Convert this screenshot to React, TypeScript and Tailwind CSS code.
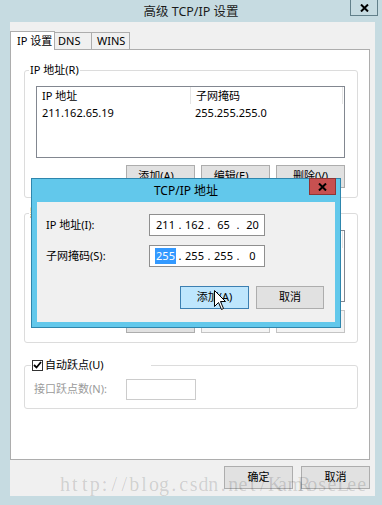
import React from "react";

const ui = "font-['Noto_Sans','Noto_Sans_CJK_SC',sans-serif]";

type Tone = "normal" | "disabled" | "hover";

function Button({
  label,
  w = "w-[69px]",
  tone = "normal",
}: {
  label: string;
  w?: string;
  tone?: Tone;
}) {
  const tones: Record<Tone, string> = {
    normal: "border-[#adadad] bg-[#e1e1e1] text-black",
    disabled: "border-[#c4c4c4] bg-[#f4f4f4] text-[#8b8b8b]",
    hover: "border-[#3c7fb1] bg-[#bee6fd] text-black",
  };
  return (
    <div
      className={`flex h-[23px] ${w} items-center justify-center border text-[11px] whitespace-nowrap ${tones[tone]}`}
    >
      {label}
    </div>
  );
}

function GroupBox({
  legend,
  className = "",
  children,
}: {
  legend: React.ReactNode;
  className?: string;
  children: React.ReactNode;
}) {
  return (
    <fieldset
      className={`ml-[13px] w-[334px] rounded-[3px] border border-[#dcdcdc] ${className}`}
    >
      {legend}
      {children}
    </fieldset>
  );
}

function ListView({ cols, rows }: { cols: string[]; rows: string[][] }) {
  return (
    <div className="ml-[11px] h-[72px] w-[309px] border border-[#828790] bg-white text-[11px]">
      <div className="flex h-[17px] leading-[17px]">
        <div className="w-[154px] border-r border-[#e5e5e5] pl-[5px]">
          {cols[0]}
        </div>
        <div className="w-[152px] border-r border-[#e5e5e5] pl-[5px]">
          {cols[1]}
        </div>
      </div>
      {rows.map((r) => (
        <div key={r[0]} className="flex h-[17px] leading-[17px]">
          <div className="w-[154px] pl-[5px]">{r[0]}</div>
          <div className="pl-[4px]">{r[1]}</div>
        </div>
      ))}
    </div>
  );
}

function IpField({ parts, selectFirst }: { parts: string[]; selectFirst?: boolean }) {
  return (
    <div className="flex h-[22px] w-[116px] items-center border border-[#8f8f8f] bg-white pl-[5px] text-[11px]">
      {parts.map((p, i) => (
        <React.Fragment key={i}>
          {i > 0 && <span className="w-[8px] text-center">.</span>}
          <span className="flex w-[21px] justify-center">
            <span
              className={
                i === 0 && selectFirst
                  ? "bg-[#3399ff] px-[1px] leading-[16px] text-white"
                  : "leading-[16px]"
              }
            >
              {p}
            </span>
          </span>
        </React.Fragment>
      ))}
    </div>
  );
}

function CloseX() {
  return (
    <svg width="9" height="8" viewBox="0 0 9 8">
      <path d="M1 0.5 L8 7.5 M8 0.5 L1 7.5" stroke="#000" strokeWidth="2" />
    </svg>
  );
}

const watermark = "http://blog.csdn.net/KamRoseLee";

export default function App() {
  return (
    <div
      className={`${ui} relative h-[505px] w-[382px] overflow-hidden bg-[#c6dbe1] text-black`}
    >
      {/* window title */}
      <div className="grid h-[22px] grid-cols-[28px_1fr_28px] px-[4px]">
        <div />
        <div className="pt-[1px] text-center text-[12.5px] leading-[21px] text-[#1b1b1b]">
          高级 TCP/IP 设置
        </div>
        <div className="flex h-[16px] items-center justify-center border border-t-0 border-[#62808a]">
          <CloseX />
        </div>
      </div>

      {/* client */}
      <div className="ml-[10px] flex h-[474px] w-[365px] flex-col bg-[#f0f0f0] pt-[9px]">
        {/* tabs */}
        <div className="relative z-10 -mb-px flex items-end text-[11px] whitespace-nowrap">
          <div className="h-[19px] w-[45px] border border-b-0 border-[#adadad] bg-white pl-[6px] leading-[18px]">
            IP 设置
          </div>
          <div className="-ml-px h-[18px] w-[38px] border border-[#adadad] bg-[#f0f0f0] pl-[3px] leading-[16px]">
            DNS
          </div>
          <div className="-ml-px h-[18px] w-[39px] border border-[#adadad] bg-[#f0f0f0] pl-[5px] leading-[16px]">
            WINS
          </div>
        </div>

        {/* tab panel */}
        <div className="h-[411px] w-[360px] border border-[#adadad] bg-white text-[11px]">
          <GroupBox
            className="mt-[12px] pb-[9px]"
            legend={<legend className="ml-[4px] px-[1px] leading-[16px]">IP 地址(R)</legend>}
          >
            <div className="mt-[8px]">
              <ListView
                cols={["IP 地址", "子网掩码"]}
                rows={[["211.162.65.19", "255.255.255.0"]]}
              />
            </div>
            <div className="mt-[7px] flex justify-end gap-[6px] pr-[12px]">
              <Button label="添加(A)..." />
              <Button label="编辑(E)..." />
              <Button label="删除(V)" />
            </div>
          </GroupBox>

          <GroupBox
            className="mt-[7px] pb-[9px]"
            legend={<legend className="ml-[4px] px-[1px] leading-[16px]">默认网关(F):</legend>}
          >
            <div className="mt-[9px]">
              <ListView cols={["网关", "跃点数"]} rows={[]} />
            </div>
            <div className="mt-[8px] flex justify-end gap-[6px] pr-[12px]">
              <Button label="添加(D)..." />
              <Button label="编辑(T)..." tone="disabled" />
              <Button label="删除(M)" tone="disabled" />
            </div>
          </GroupBox>

          <GroupBox
            className="mt-[14px] pb-[8px]"
            legend={
              <legend className="ml-[6px] pr-[47px] pl-[1px] leading-[16px]">
                <span className="flex items-center gap-[2px]">
                  <span className="flex h-[11px] w-[11px] items-center justify-center border border-[#333] bg-white">
                    <svg width="9" height="8" viewBox="0 0 9 8">
                      <path
                        d="M1 4 L3.5 6.5 L8 1"
                        stroke="#000"
                        strokeWidth="1.8"
                        fill="none"
                      />
                    </svg>
                  </span>
                  自动跃点(U)
                </span>
              </legend>
            }
          >
            <div className="mt-[6px] flex items-center">
              <div className="w-[101px] pl-[9px] text-[#9a9a9a]">接口跃点数(N):</div>
              <div className="h-[21px] w-[70px] border border-[#cccccc] bg-white" />
            </div>
          </GroupBox>
        </div>

        {/* dialog buttons */}
        <div className="mt-[6px] flex justify-end gap-[8px] pr-[5px]">
          <Button label="确定" />
          <Button label="取消" />
        </div>
      </div>

      {/* modal: TCP/IP 地址 */}
      <div className="absolute top-[178px] left-[31px] z-20 h-[150px] w-[310px] border border-[#2e86ad] bg-[#62c8eb]">
        <div className="grid h-[23px] grid-cols-[27px_1fr_27px] px-[4px]">
          <div />
          <div className="text-center text-[12px] leading-[23px] text-black">
            TCP/IP 地址
          </div>
          <div className="-mt-px flex h-[17px] items-center justify-center border border-[#8e3535] bg-[#c75050]">
            <CloseX />
          </div>
        </div>
        <div className="mx-[5px] h-[120px] bg-[#f0f0f0] pt-[12px] text-[11px]">
          <div className="flex items-center">
            <div className="w-[112px] pl-[9px]">IP 地址(I):</div>
            <IpField parts={["211", "162", "65", "20"]} />
          </div>
          <div className="mt-[9px] flex items-center">
            <div className="w-[112px] pl-[9px]">子网掩码(S):</div>
            <IpField parts={["255", "255", "255", "0"]} selectFirst />
          </div>
          <div className="mt-[19px] flex justify-end gap-[7px] pr-[11px]">
            <Button label="添加(A)" tone="hover" />
            <Button label="取消" w="w-[68px]" />
          </div>
        </div>
      </div>

      {/* mouse pointer */}
      <svg
        className="absolute top-[290px] left-[214px] z-30"
        width="13"
        height="21"
        viewBox="0 0 13 21"
      >
        <path
          d="M0.5 0.5 L0.5 16.5 L4.5 12.5 L7.5 19.5 L9.5 18.5 L6.5 11.5 L11.5 11.5 Z"
          fill="#fff"
          stroke="#000"
          strokeWidth="1"
        />
      </svg>

      {/* watermark */}
      <div className="pointer-events-none absolute top-[474px] left-[60px] z-30 flex font-['Liberation_Serif',serif] text-[20px] leading-[20px] text-black/15">
        {watermark.split("").map((c, i) => (
          <span key={i} className="inline-block w-[9.9px] text-center">
            {c}
          </span>
        ))}
      </div>
    </div>
  );
}
